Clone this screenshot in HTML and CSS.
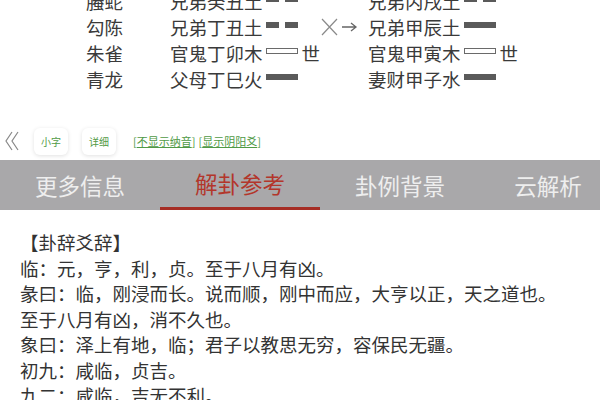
FILE: index.html
```html
<!DOCTYPE html>
<html lang="zh">
<head>
  <meta charset="UTF-8">
  <meta name="viewport" content="width=device-width, initial-scale=1.0">
  <title>解卦参考</title>
  <link rel="stylesheet" href="styles.css">
</head>
<body>
  <div class="gua">
    <div class="row">
      <span class="god">螣蛇</span>
      <span class="yao"><span class="name">兄弟癸丑土</span><span class="bar yin"><i></i><i></i></span></span>
      <span class="change"></span>
      <span class="yao"><span class="name">兄弟丙戌土</span><span class="bar yin"><i></i><i></i></span></span>
    </div>
    <div class="row">
      <span class="god">勾陈</span>
      <span class="yao"><span class="name">兄弟丁丑土</span><span class="bar yin"><i></i><i></i></span></span>
      <span class="change">
        <svg width="40" height="18" viewBox="0 0 40 18">
          <path d="M2 1 L17 17 M17 1 L2 17" stroke="#8a8a8a" stroke-width="1.2" fill="none"/>
          <path d="M22 9 H36 M31 5 L36 9 L31 13" stroke="#666" stroke-width="1.3" fill="none"/>
        </svg>
      </span>
      <span class="yao"><span class="name">兄弟甲辰土</span><span class="bar yang"></span></span>
    </div>
    <div class="row">
      <span class="god">朱雀</span>
      <span class="yao"><span class="name">官鬼丁卯木</span><span class="bar hollow"></span><span class="shi">世</span></span>
      <span class="change"></span>
      <span class="yao"><span class="name">官鬼甲寅木</span><span class="bar hollow"></span><span class="shi">世</span></span>
    </div>
    <div class="row">
      <span class="god">青龙</span>
      <span class="yao"><span class="name">父母丁巳火</span><span class="bar yang"></span></span>
      <span class="change"></span>
      <span class="yao"><span class="name">妻财甲子水</span><span class="bar yang"></span></span>
    </div>
  </div>

  <div class="toolbar">
    <svg class="back" width="14" height="20" viewBox="0 0 14 20">
      <path d="M7 1 L1 10 L7 19 M13 1 L7 10 L13 19" stroke="#888" stroke-width="1.2" fill="none"/>
    </svg>
    <span class="tool-btn">小字</span>
    <span class="tool-btn">详细</span>
    <span class="tool-link">[<u>不显示纳音</u>]</span>
    <span class="tool-link">[<u>显示阴阳爻</u>]</span>
  </div>

  <div class="tabs">
    <div class="tab">更多信息</div>
    <div class="tab active">解卦参考</div>
    <div class="tab">卦例背景</div>
    <div class="tab last">云解析</div>
  </div>

  <div class="content">
    <div>【卦辞爻辞】</div>
    <div>临：元，亨，利，贞。至于八月有凶。</div>
    <div>彖曰：临，刚浸而长。说而顺，刚中而应，大亨以正，天之道也。</div>
    <div>至于八月有凶，消不久也。</div>
    <div>象曰：泽上有地，临；君子以教思无穷，容保民无疆。</div>
    <div>初九：咸临，贞吉。</div>
    <div>九二：咸临，吉无不利。</div>
  </div>
</body>
</html>
```

FILE: styles.css
```css
body {
  margin: 0;
  background-color: #fff;
  font-family: 'Noto Sans CJK SC', 'Noto Sans', sans-serif;
  color: #333;
  overflow: hidden;
}
.gua {
  margin-top: -12px;
  padding-left: 86px;
  font-size: 18.5px;
  color: #3a3a3a;
}
.row {
  display: flex;
  align-items: center;
  height: 26px;
}
.god {
  width: 84px;
}
.yao {
  display: flex;
  align-items: center;
  width: 150px;
}
.change {
  width: 48px;
  display: flex;
  align-items: center;
}
.bar {
  display: flex;
  justify-content: space-between;
  width: 32px;
  height: 6px;
  margin-left: 3px;
  margin-bottom: 5px;
  box-sizing: border-box;
}
.yin i {
  display: block;
  width: 13px;
  height: 6px;
  background-color: #5a5a5a;
}
.yang {
  background-color: #5a5a5a;
}
.hollow {
  border: 1.5px solid #6a6a6a;
  background-color: #fff;
}
.shi {
  margin-left: 4px;
}
.toolbar {
  display: flex;
  align-items: center;
  height: 38px;
  margin-top: 30px;
  padding-left: 5px;
}
.back {
  margin-right: 15px;
}
.tool-btn {
  display: inline-block;
  padding: 6px 7px;
  margin-right: 14px;
  font-size: 10px;
  color: #4f9a45;
  background-color: #fff;
  border-radius: 6px;
  box-shadow: 0 1px 4px rgba(0, 0, 0, 0.12);
}
.tool-btn + .tool-btn {
  margin-right: 17px;
}
.tool-link {
  font-size: 11px;
  color: #4f9a45;
  margin-right: 3px;
}
.tabs {
  display: flex;
  height: 50px;
  background-color: #a9a8aa;
  overflow: hidden;
}
.tab {
  flex: 0 0 160px;
  box-sizing: border-box;
  height: 50px;
  line-height: 50px;
  text-align: center;
  font-size: 22.5px;
  color: #eeeeee;
}
.tab.last {
  flex-basis: 136px;
}
.tab.active {
  color: #b3362b;
  border-bottom: 3px solid #a62d25;
  line-height: 47px;
}
.content {
  padding: 20px 20px 0 20px;
  font-size: 18.5px;
  line-height: 25.5px;
  color: #333;
}
```
